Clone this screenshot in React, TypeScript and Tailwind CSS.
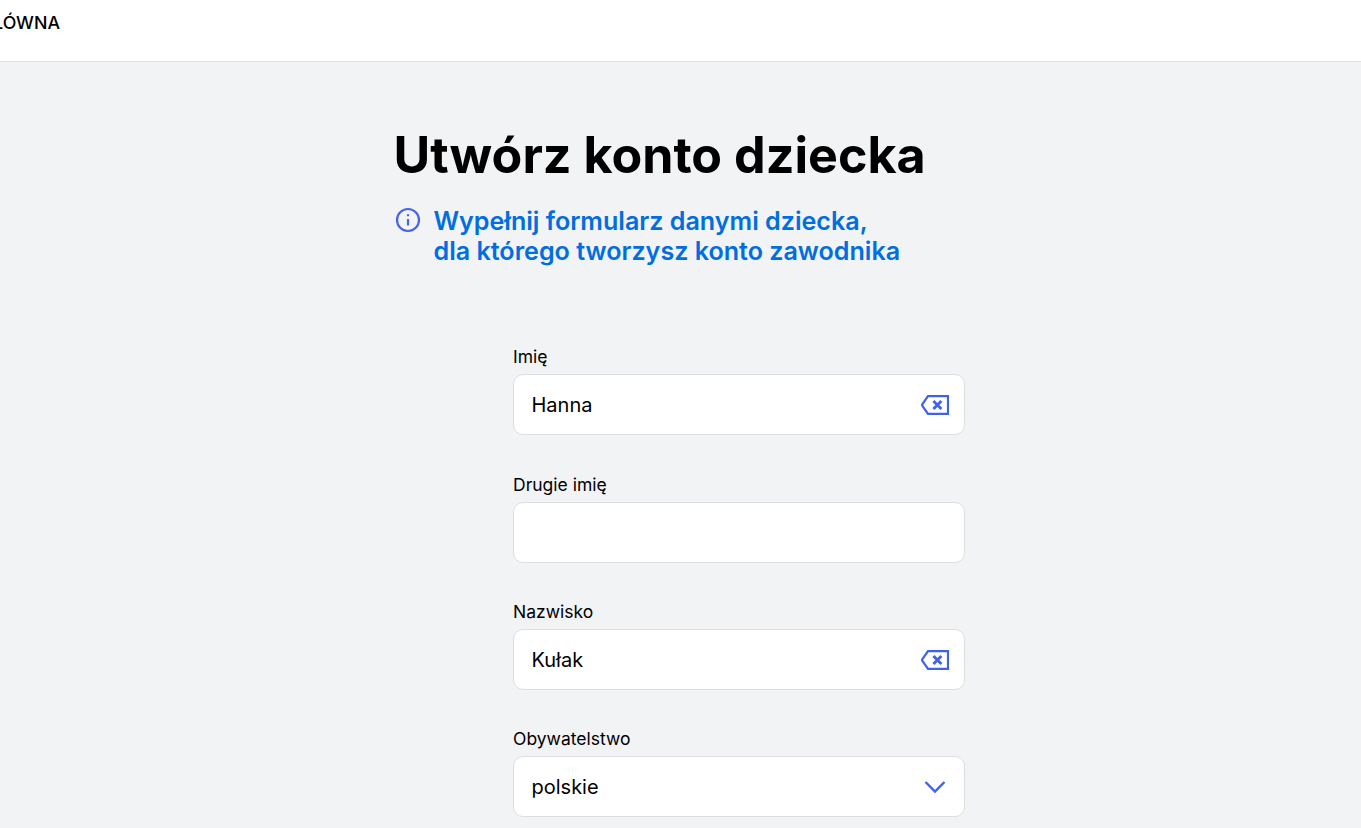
const FONT = "font-['Inter','Noto_Sans',sans-serif]";

function ClearIcon() {
  return (
    <svg width="28" height="20" viewBox="0 0 28 20" fill="none" stroke="#3f62e8" strokeWidth="2.2" className="shrink-0">
      <path d="M7 1.1H27V18.9H7L0.9 10Z" />
      <path d="M12.4 6.1L20.4 14.1M20.4 6.1L12.4 14.1" strokeWidth="2.8" />
    </svg>
  );
}

function Chevron() {
  return (
    <svg width="22" height="14" viewBox="0 0 22 14" fill="none" stroke="#3f62e8" strokeWidth="2.4" className="shrink-0">
      <path d="M1.5 2L11 11.5L20.5 2" />
    </svg>
  );
}

function Field({ label, value, icon, chevron }: { label: string; value?: string; icon?: React.ReactNode; chevron?: boolean }) {
  return (
    <div className="flex flex-col">
      <label className="text-[17.5px] leading-[20px] text-black mb-[7px]">{label}</label>
      <div className={`h-[61px] bg-white border border-[#dcdee3] rounded-[10px] pl-[17.5px] flex items-center justify-between ${chevron ? "pr-[18px]" : "pr-[15px]"}`}>
        <span className="text-[20px] text-black">{value}</span>
        {icon}
      </div>
    </div>
  );
}

export default function App() {
  return (
    <div className={`${FONT} h-[828px] overflow-hidden bg-[#f2f3f5]`}>
      <header className="h-[62px] bg-white border-b border-[#e2e3e6] flex items-start">
        <div className="w-[60px] h-[46px] overflow-hidden flex justify-end items-center">
          <span className="text-[17.8px] font-medium text-black whitespace-nowrap">GŁÓWNA</span>
        </div>
      </header>
      <main className="w-[1361px]">
        <div className="ml-[393.5px] w-[620px] pt-[60px]">
          <h1 className="text-[50.2px] leading-[66px] font-bold text-black whitespace-nowrap">Utwórz konto dziecka</h1>
          <div className="flex mt-[17.5px] gap-[14px]">
            <svg width="26" height="26" viewBox="0 0 26 26" fill="none" stroke="#4664e6" strokeWidth="2.2" className="shrink-0 ml-[1px] mt-[1px]">
              <circle cx="13" cy="13" r="11" />
              <path d="M13 12V18.5" />
              <path d="M13 7.2V9.2" />
            </svg>
            <p className="text-[25.1px] leading-[30px] font-semibold text-[#006ee0] -ml-[1px]">
              Wypełnij formularz danymi dziecka,
              <br />
              dla którego tworzysz konto zawodnika
            </p>
          </div>
        </div>
        <form className="ml-[513px] w-[452px] mt-[81.8px] flex flex-col gap-[39.4px]">
          <Field label="Imię" value="Hanna" icon={<ClearIcon />} />
          <Field label="Drugie imię" />
          <Field label="Nazwisko" value="Kułak" icon={<ClearIcon />} />
          <Field label="Obywatelstwo" value="polskie" icon={<Chevron />} chevron />
        </form>
      </main>
    </div>
  );
}
